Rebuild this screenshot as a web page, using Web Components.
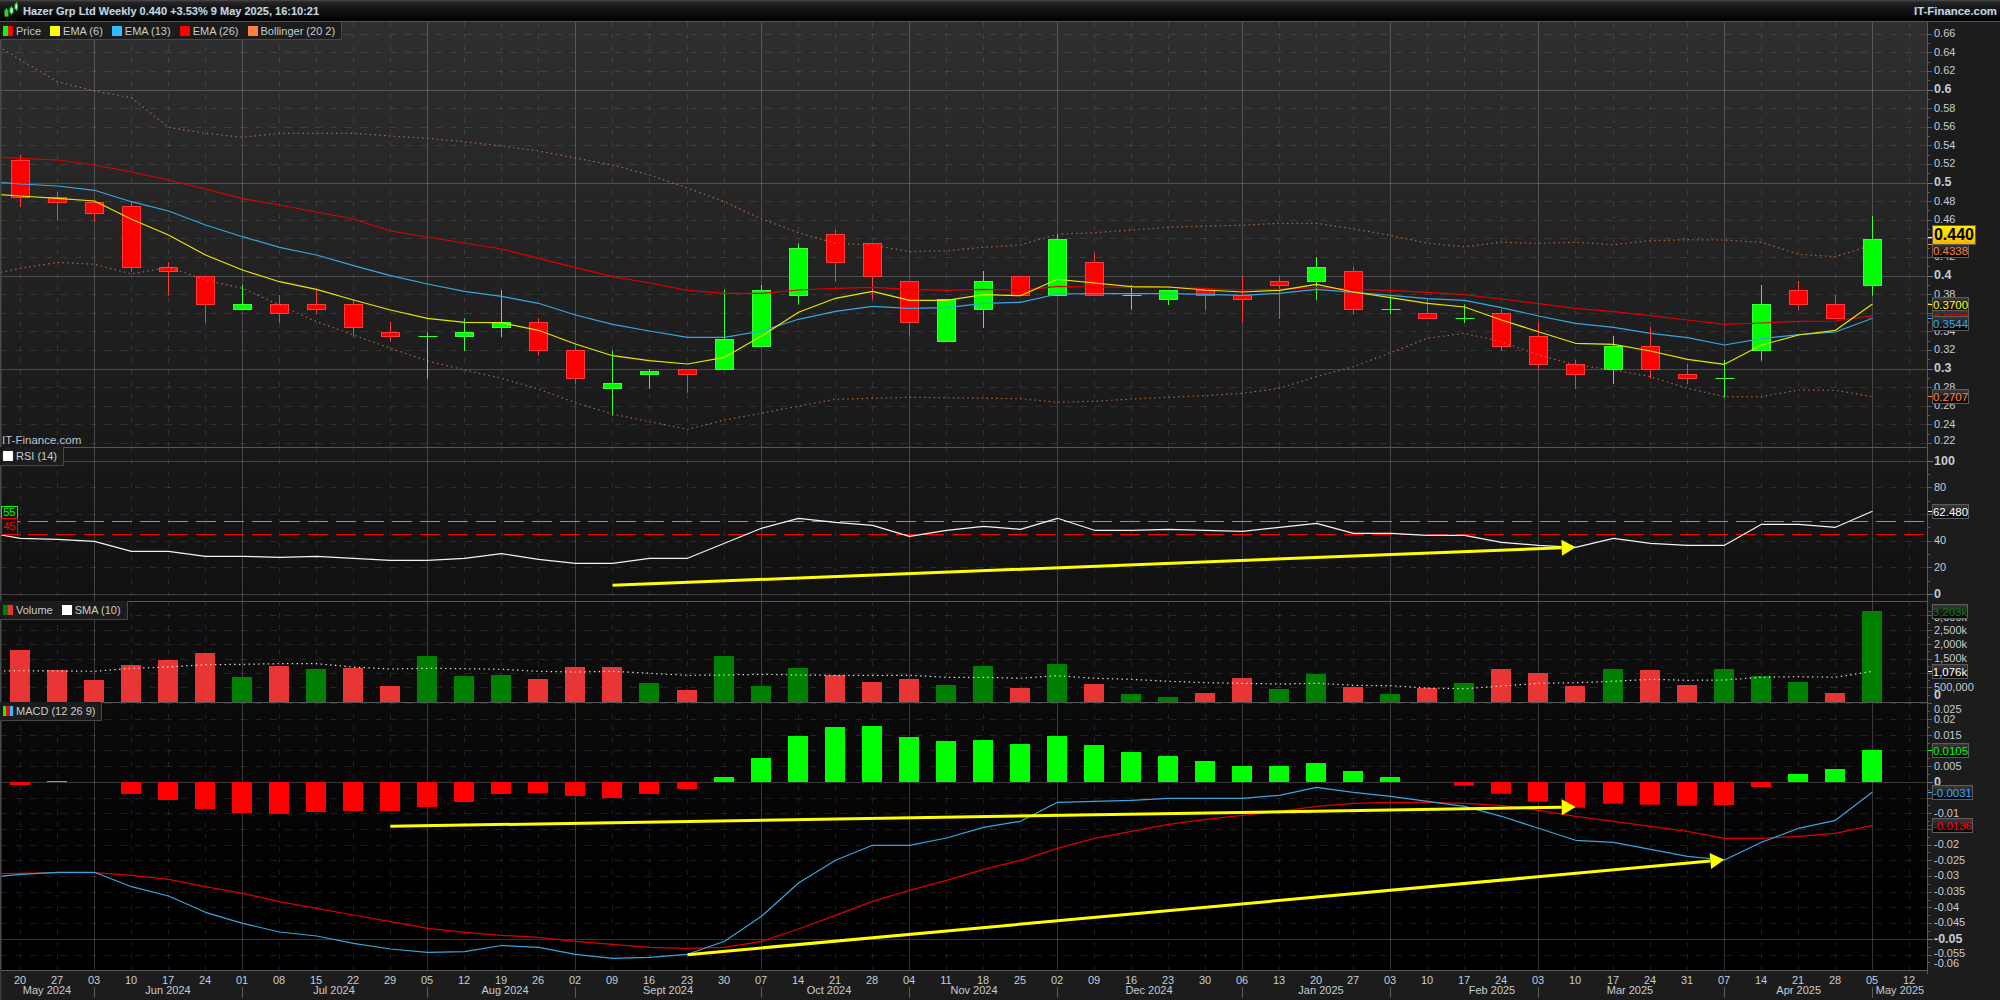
<!DOCTYPE html>
<html><head><meta charset="utf-8"><title>Hazer Grp Ltd Weekly</title>
<style>
html,body{margin:0;padding:0;background:#1c1c1c;overflow:hidden}
body{width:2000px;height:1000px;display:flex;flex-direction:column;font-family:"Liberation Sans",Arial,sans-serif;font-size:11px;color:#c4ccd4}
</style></head>
<body>
<it-header><span slot="title">Hazer Grp Ltd Weekly 0.440 +3.53% 9 May 2025, 16:10:21</span><span slot="site">IT-Finance.com</span></it-header>

<it-pane kind="price" top="22" height="425">
  <it-legend slot="legend" h="18">
    <it-legend-item colors="#0f0,#f00">Price</it-legend-item>
    <it-legend-item colors="#ff0">EMA (6)</it-legend-item>
    <it-legend-item colors="#33bbff">EMA (13)</it-legend-item>
    <it-legend-item colors="#f00">EMA (26)</it-legend-item>
    <it-legend-item colors="#ff7f40">Bollinger (20 2)</it-legend-item>
  </it-legend>
  <it-tag slot="tags" y="243" w="37" fg="#ff7f40" tick="244.6">0.4338</it-tag>
  <it-tag slot="tags" y="225" w="44" h="20" big tick="237.5">0.440</it-tag>
  <it-tag slot="tags" y="297" w="37" fg="#ff0" tick="304">0.3700</it-tag>
  <it-tag slot="tags" y="310" w="37" fg="#f00" tick="315.6">0.3582</it-tag>
  <it-tag slot="tags" y="316" w="37" fg="#35a8ff" tick="318.5">0.3544</it-tag>
  <it-tag slot="tags" y="389" w="37" fg="#ff7f40" tick="396.7">0.2707</it-tag>
  <span slot="note">IT-Finance.com</span>
</it-pane>

<it-pane kind="rsi" top="447" height="154">
  <it-legend slot="legend" h="19"><it-legend-item colors="#fff">RSI (14)</it-legend-item></it-legend>
  <it-level slot="tags" y="505.5" h="13.5" color="#0f0">55</it-level>
  <it-level slot="tags" y="518" h="16.5" color="#f00">45</it-level>
  <it-tag slot="tags" y="504" w="37" fg="#fff" tick="511.3">62.480</it-tag>
</it-pane>

<it-pane kind="vol" top="601" height="101">
  <it-legend slot="legend" h="19">
    <it-legend-item colors="#008000,#e83535">Volume</it-legend-item>
    <it-legend-item colors="#fff">SMA (10)</it-legend-item>
  </it-legend>
  <it-tag slot="tags" y="604" w="36" fg="#0a7a0a" tick="611">3,203k</it-tag>
  <it-tag slot="tags" y="664" w="36" fg="#fff" tick="671.5">1,076k</it-tag>
</it-pane>

<it-pane kind="macd" top="702" height="268">
  <it-legend slot="legend" h="19"><it-legend-item colors="#0f0,#f00,#33bbff">MACD (12 26 9)</it-legend-item></it-legend>
  <it-tag slot="tags" y="743" w="37" fg="#0f0" tick="750.3">0.0105</it-tag>
  <it-tag slot="tags" y="785" w="41" fg="#35a8ff" tick="792.3">-0.0031</it-tag>
  <it-tag slot="tags" y="818" w="41" fg="#f00" tick="825.7">-0.0136</it-tag>
</it-pane>

<it-timeaxis></it-timeaxis>

<script>
const X0=20.3,DX=37.04;
const cx=i=>Math.floor(X0+DX*i)+.5;
const SOLID=new Set([2,6,11,15,20,24,28,33,37,41,46,50]);
const COLS=['#2f2f2f','#000'];
const CANDLES=[
[155,160.3,197.7,207,'r'],[192,197.3,202.7,220.7,'r'],[202,202,213.7,220.7,'r'],[201.3,206.3,267.7,272.3,'r'],
[262.3,267.3,271.7,295.7,'r'],[276.3,276.3,304.7,322.7,'r'],[285,304.3,309.7,309.7,'g'],[295,304.3,313.7,322.7,'r'],
[289.7,304.3,309.7,313.7,'r'],[300,304.3,327.7,336.7,'r'],[322,332.3,336.7,341.7,'r'],[332.3,336.3,336.3,378.7,'g'],
[318.3,332.3,336.7,351,'g'],[290,322.3,327.7,337,'g'],[318.3,322.3,350.7,355.7,'r'],[345.7,350.3,378.7,383.7,'r'],
[350.3,383.3,388.7,415.7,'g'],[369,371.3,374.7,388.7,'g'],[369.3,369.3,374.3,392.7,'r'],[290,339.3,369.7,369.7,'g'],
[285,290.3,346.7,346.7,'g'],[243.3,248.3,295.7,304.7,'g'],[230,234.3,262.7,281.7,'r'],[243.3,243.3,276.7,299.7,'r'],
[281.3,281.3,322.7,337,'r'],[299.3,299.3,341.7,341.7,'g'],[271,281.3,309.7,328,'g'],[276.3,276.3,295.7,295.7,'r'],
[234.3,239.3,295.7,295.7,'g'],[253,262.3,295.7,295.7,'r'],[285,295.3,295.3,309.7,'g'],[290.3,290.3,299.7,305,'g'],
[290.3,290.3,295.7,310,'r'],[276.3,295.7,299.7,322.7,'r'],[276.3,281.3,285.7,319,'r'],[257,267.3,281.7,299.7,'g'],
[267,271.3,309.7,313.7,'r'],[295.7,309.3,309.3,314,'g'],[299,313.3,318.7,318.7,'r'],[304.3,318.3,318.3,323,'g'],
[309,313.3,346.7,351,'r'],[322.3,336.3,364.7,370,'r'],[360,364.3,374.7,389,'r'],[336,346.3,369.7,384,'g'],
[327,346.3,369.7,378.7,'r'],[364,374.3,378.7,384,'r'],[360,378.3,378.3,397.3,'g'],[285,304,350.7,360.7,'g'],
[281,290.3,304.7,310,'r'],[295,304.3,318.7,318.7,'r'],[216,239.3,285.7,295.7,'g']];
const EMA26=[158.3,160,165,172,180,189,198.7,205,212,219,231,237,243,249,258.3,267.7,276.7,283,290.3,293.3,293.3,290,288.3,287.3,289.3,290.3,289.3,290.3,286.3,287,287.3,287.3,288.7,290,289.3,287.3,289.3,290.3,292.3,294.7,299,303.7,308.3,311.7,315.7,320,324.3,323,321.3,321,315.7];
const EMA13=[184,186,190.3,201.7,211,225,236.7,247.3,255,265.7,275.7,284,291.3,296.3,303.3,315,324.3,331,337.3,337.3,331,319.3,311.3,306.3,308.3,307.7,303.3,302.3,294,293.7,293.7,293.7,294.3,295.3,293.3,289.3,292.3,295.3,298.7,300.3,307.7,316,323.3,327.3,333.3,337.7,345,338.7,334.7,332,318.3];
const EMA6=[196,198.3,201,219.3,235,255,270,281.7,289.3,300,310,318.3,322.3,322.7,330.3,344,355.7,360.7,364,357.3,336,312.3,298.3,291.3,300.3,300.3,294.7,295.7,279.3,283,286.7,287,290,292,290.3,284.3,292,297.7,303.3,307,320,331.7,343.3,344.3,351,359.3,364.3,345,335,330.3,304];
const BBU=[60,81.7,91,97.7,127.3,133.3,137.3,133.3,133.3,133.3,136,138.3,141.7,146,151,158,165,175,188,201.7,219,232.7,243.3,245,251.7,250.7,247.3,245,234.3,232.7,230,227.3,226,225.3,223.3,223.3,229,235.3,243.3,246.7,242.3,243.3,242.3,244.7,240.7,239.7,240,242.3,254.3,256.7,245];
const BBL=[268.3,262.3,264.3,274,267.3,280,288.3,305,321.7,335,348.3,361,370,378.3,389,402.7,414,421.7,429.3,420,413.3,406,399.3,398.3,397.3,397.7,398.3,398.7,402.3,401.3,399,397.3,395.7,393.3,388.3,376.7,366.7,352.7,338.3,333.3,341.7,355,365,370,376.7,388.3,396.7,396.7,390,390.3,396.7];
const RSI=[538.3,539.3,541.3,551.3,551.3,556.3,556.3,557.3,556.3,558.3,560.3,560.3,558.3,553.7,559.3,563.3,563.3,558.3,558.3,543.3,528.3,518.3,522.3,525.3,536.3,530.3,526.3,529.3,518.3,530.3,530.3,529.3,530.3,531.3,527.3,523.3,533.3,533.3,535.3,535.3,542.3,545.3,547.3,538.3,543.3,545.3,545.3,524.3,524.3,527.3,511.3];
const VOL=[[650,'r'],[670,'r'],[680,'r'],[665,'r'],[660,'r'],[653,'r'],[677,'g'],[666,'r'],[669,'g'],[668,'r'],[686,'r'],[656,'g'],[676,'g'],[675,'g'],[679,'r'],[667,'r'],[667,'r'],[683,'g'],[690,'r'],[656,'g'],[686,'g'],[668,'g'],[675,'r'],[682,'r'],[679,'r'],[685,'g'],[666,'g'],[688,'r'],[664,'g'],[684,'r'],[694,'g'],[697,'g'],[693,'r'],[678,'r'],[689,'g'],[674,'g'],[687,'r'],[694,'g'],[688,'r'],[683,'g'],[669,'r'],[673,'r'],[686,'r'],[669,'g'],[670,'r'],[685,'r'],[669,'g'],[676,'g'],[682,'g'],[693,'r'],[611,'g']];
const SMA=[670.7,671,671.3,668.3,667,664.7,664.3,663.7,663.7,667,669,668.3,668.7,669.3,671.3,672,671.3,673.3,675.3,675,674.3,675,675.3,675.3,675.3,677.3,677.3,678.3,675.7,678.3,679.3,681.3,682.7,683.3,684,683.3,685.3,685.7,688,688.7,686,683.3,682.7,681.3,679.3,680.3,680,677.3,676.7,677.3,671.3];
const HIST=[785,781,782,794,800,809,813,814,812,811,811,807,802,794,793,796,798,794,789,777,758,736,727,726,737,741,740,744,736,745,752,756,761,766,766,763,771,777,782,785.7,793.7,801.7,807.7,803.7,804.7,805.7,805,787,774,769,750];
const MBLUE=[874.3,872.3,872.3,886.7,896,912.3,923.3,932,936,943.3,949,952.3,951.7,945.5,947.3,954.3,958.3,957.3,954.3,941.3,916.3,883,860.3,845.3,845.3,838,827.3,821.3,802.3,801.3,800.3,798.3,798.3,798.3,795.3,787.3,792.3,796.3,801.3,806.3,816.3,828.3,840.3,842.3,849.3,856.3,860,842.3,828.3,820.3,792];
const MRED=[873.3,872.7,872.7,875.3,879.3,886.7,893.3,901.7,908.3,915,921.7,928.3,932.3,935.3,937.3,941.3,944.3,947.3,948.3,947.3,941.3,929,915.3,901.3,890.3,880.3,869.3,860.3,848.3,838.3,831.3,824.3,819.3,815.3,811.3,806.3,803.3,802.3,802.3,803.3,805.3,810.3,816.3,821.3,826.3,831.3,838.3,838.3,836.3,833.3,825.3];
const poly=(a,c,w,extra='',start)=>{let p=a.map((y,i)=>cx(i)+','+y).join(' ');if(start)p=start+' '+p;return `<polyline points="${p}" fill="none" stroke="${c}" stroke-width="${w}" stroke-linejoin="round" ${extra}/>`};
const HG='rgba(255,255,255,.1)',SG='rgba(255,255,255,.2)';
const hd=y=>`<line x1="0" x2="1928" y1="${Math.floor(y)+.5}" y2="${Math.floor(y)+.5}" stroke="${HG}" stroke-dasharray="7 8"/>`;
const hs=y=>`<line x1="0" x2="1928" y1="${Math.floor(y)+.5}" y2="${Math.floor(y)+.5}" stroke="${SG}"/>`;
const verticals=(t,b)=>{let s='';for(let i=0;i<52;i++){s+=SOLID.has(i)?`<line x1="${cx(i)}" x2="${cx(i)}" y1="${t}" y2="${b}" stroke="${SG}"/>`:`<line x1="${cx(i)}" x2="${cx(i)}" y1="${t}" y2="${b}" stroke="${HG}" stroke-dasharray="5 7"/>`}return s};
const arrow=(x1,y1,tx,ty,w=3)=>{const L=Math.hypot(tx-x1,ty-y1),ux=(tx-x1)/L,uy=(ty-y1)/L,bx=tx-ux*14,by=ty-uy*14,nx=-uy*8,ny=ux*8;
 return `<line x1="${x1}" y1="${y1}" x2="${bx}" y2="${by}" stroke="#ff0" stroke-width="${w}"/><polygon fill="#ff0" points="${tx},${ty} ${bx+nx},${by+ny} ${bx-nx},${by-ny}"/>`};
const lab=(t,yc,b)=>`<text x="1934" y="${yc+4}" ${b?'font-weight="700" font-size="12.5"':''}>${t}</text>`;
const tick=(y,l,c='#5a5a5a')=>`<line x1="1928" x2="${1928+l}" y1="${Math.floor(y)+.5}" y2="${Math.floor(y)+.5}" stroke="${c}"/>`;

const KINDS={
 price(){let g='',a='';
  for(let v=66;v>=22;v-=1){const y=90+(60-v)*9.3;
    if(v%10==0){g+=hs(y);a+=tick(y,5,'#777')}else if(v%2==0){g+=hd(y);a+=tick(y,4)}else a+=tick(y,2);
    if(v%2==0&&v!=44&&v!=36){const t=(v/100).toString();a+=lab(t,v==22?440:y-1,v%10==0)}
  }
  let c='';CANDLES.forEach((k,i)=>{const x=cx(i),col=k[4]=='r'?['#f00','#ff3a3a']:['#0f0','#3cff3c'],T=Math.floor(k[1])+.5,B=Math.floor(k[2])+.5;
    c+=`<line x1="${x}" x2="${x}" y1="${k[0]}" y2="${k[3]}" stroke="${col[1]}"/>`;
    c+=T==B?`<line x1="${x-9}" x2="${x+10}" y1="${T}" y2="${T}" stroke="${col[1]}"/>`:`<rect x="${x-9}" y="${T}" width="18" height="${B-T}" fill="${col[0]}" stroke="${col[1]}"/>`});
  const dots=`stroke-dasharray="1.4 3.4"`;
  const l=poly(BBU,'#b8693e',1.2,dots,'3,49')+poly(BBL,'#b8693e',1.2,dots,'1,272.3')+poly(EMA26,'#dc0000',1.25,'','0,157')+poly(EMA13,'#38a6de',1.2,'','0,182.3')+poly(EMA6,'#e6e600',1.2,'','0,194.7');
  return {g,c:c+l,a}},
 rsi(){let g=hs(461.3)+hs(594.3),a='';
  for(let v=90;v>0;v-=10){const y=461.3+(100-v)*1.33;if(v%20==0)g+=hd(y);a+=tick(y,v%20==0?4:2)}
  a+=tick(461.3,5,'#777')+tick(594.3,5,'#777');
  a+=lab('100',461,1)+lab('80',487.3)+lab('40',540.3)+lab('20',567.3)+lab('0',594,1);
  const d=`stroke-dasharray="20 8"`;
  const c=`<line x1="0" x2="1924" y1="521.5" y2="521.5" stroke="#2fd62f" ${d}/><line x1="0" x2="1924" y1="534.5" y2="534.5" stroke="#f00" ${d}/>`+poly(RSI,'#f2f2f2',1.2,'','1,535')+arrow(612.5,585.3,1575.7,547.3);
  return {g,c,a}},
 vol(){let g='',a='',c='';
  for(let v=500;v<=3000;v+=500){const y=702.3-v*.0288;g+=hd(y);a+=tick(y,4);a+=tick(y+7.2,2)}
  a+=lab('3,000k',617)+lab('2,500k',630)+lab('2,000k',644)+lab('1,500k',658)+lab('500,000',687.3)+lab('0',695,1);
  VOL.forEach((k,i)=>{c+=`<rect x="${cx(i)-10.5}" y="${k[0]}" width="20" height="${702-k[0]}" fill="${k[1]=='r'?'#e83535':'#008000'}"/>`});
  c+=poly(SMA,'#e4e4e4',1.2,'stroke-dasharray="1.4 3.4"','4,671');
  return {g,c,a}},
 macd(){let g='',a='',c='';
  for(let k=5;k>=-12;k--){const y=782.3-k*15.7;if(k==0||k==-10)g+=hs(y);else g+=hd(y);a+=tick(y,k==0||k==-10?5:4,k==0||k==-10?'#777':'#5a5a5a');a+=tick(y-7.85,2)}
  [['0.025',709.3],['0.02',719],['0.015',735],['0.005',766],['0',781.7,1],['-0.01',813.3],['-0.02',844],['-0.025',859.7],['-0.03',875.3],['-0.035',891],['-0.04',906.7],['-0.045',922],['-0.05',938.7,1],['-0.055',953.3],['-0.06',963.3]].forEach(r=>a+=lab(r[0],r[1],r[2]));
  HIST.forEach((h,i)=>{if(h==782)return;const up=h<782;c+=`<rect x="${cx(i)-10.5}" y="${up?h:782}" width="20" height="${Math.abs(h-782)}" fill="${up?'#0f0':'#f00'}"/>`});
  c+=poly(MRED,'#dc0000',1.25,'','0,873.7')+poly(MBLUE,'#38a6de',1.2,'','0,876.3');
  c+=arrow(390.3,826.3,1575.7,807)+arrow(687.5,954.7,1724.3,859.7);
  return {g,c,a}}
};

class ItHeader extends HTMLElement{constructor(){super();this.attachShadow({mode:'open'}).innerHTML=`<style>
:host{display:flex;align-items:center;height:21px;border-bottom:1px solid #555;background:linear-gradient(#4c4c4c 0,#262626 2px,#161616 8px,#000 100%);flex:none;padding:0 3px 0 4px;gap:5px;font:700 11px "Liberation Sans",Arial,sans-serif;color:#c6d2da;text-shadow:0 0 1px #2a4a66}
svg{flex:none}
.t{flex:1;white-space:nowrap}
::slotted([slot=site]){font-size:11.4px}
</style><svg width="14" height="18" viewBox="0 0 14 18"><g stroke="#35c035" fill="#39d839"><path d="M2.5 6v9" fill="none"/><rect x="1" y="8" width="3" height="6"/><path d="M7.5 4v9" fill="none"/><rect x="6" y="6" width="3" height="5" fill="#cfe"/><path d="M12.5 0v9" fill="none"/><rect x="11" y="2" width="2.5" height="5" fill="#cfe"/></g></svg><div class="t"><slot name="title"></slot></div><slot name="site"></slot>`}}
customElements.define('it-header',ItHeader);

class ItLegend extends HTMLElement{constructor(){super();this.attachShadow({mode:'open'}).innerHTML=`<style>
:host{position:absolute;left:0;top:0;display:flex;box-sizing:border-box}
</style><slot></slot>`}connectedCallback(){this.style.height=this.getAttribute('h')+'px'}}
customElements.define('it-legend',ItLegend);

class ItLegendItem extends HTMLElement{constructor(){super();this.attachShadow({mode:'open'})}
connectedCallback(){const c=(this.getAttribute('colors')||'').split(',');
this.shadowRoot.innerHTML=`<style>
:host{display:flex;align-items:center;gap:3px;height:100%;box-sizing:border-box;padding:0 6px 0 2px;background:#1c1c1c;border:1px solid #484848;border-top:0;border-left-color:transparent;margin-left:-1px;font:11px "Liberation Sans",Arial,sans-serif;color:#c4ccd4;white-space:nowrap}
:host(:first-child){margin-left:0}
.s{display:flex;width:10px;height:10px;flex:none}.s i{flex:1}
</style><span class="s">${c.map(x=>`<i style="background:${x}"></i>`).join('')}</span><slot></slot>`}}
customElements.define('it-legend-item',ItLegendItem);

class ItTag extends HTMLElement{constructor(){super();this.attachShadow({mode:'open'})}
tickHTML(){const y=Math.floor(+this.getAttribute('tick'))+.5;return `<line x1="1928" x2="1933" y1="${y}" y2="${y}" stroke="${this.getAttribute('fg')||'#fff'}"/>`}
connectedCallback(){const top=+this.closest('it-pane').getAttribute('top'),y=+this.getAttribute('y'),big=this.hasAttribute('big'),h=this.getAttribute('h')||15;
this.shadowRoot.innerHTML=`<style>
:host{position:absolute;left:1932px;top:${y-top}px;width:${this.getAttribute('w')}px;height:${h}px;box-sizing:border-box;display:flex;align-items:center;justify-content:center;border:1px solid #5c5c5c;white-space:nowrap;font:${big?'700 16px':'11.5px'} "Liberation Sans",Arial,sans-serif;color:${big?'#000':this.getAttribute('fg')};background:${big?'linear-gradient(#ffee00,#f5b400)':'linear-gradient(#3a3a3a,#000)'}}
</style><slot></slot>`}}
customElements.define('it-tag',ItTag);

class ItLevel extends HTMLElement{constructor(){super();this.attachShadow({mode:'open'})}
connectedCallback(){const top=+this.closest('it-pane').getAttribute('top'),c=this.getAttribute('color');
this.shadowRoot.innerHTML=`<style>
:host{position:absolute;left:1px;top:${+this.getAttribute('y')-top}px;width:16.5px;height:${this.getAttribute('h')}px;box-sizing:border-box;border:1px solid ${c};background:#141414;color:${c};display:flex;align-items:center;justify-content:center;font:11px/11px "Liberation Sans",Arial,sans-serif}
</style><slot></slot>`}}
customElements.define('it-level',ItLevel);

class ItPane extends HTMLElement{constructor(){super();this.attachShadow({mode:'open'})}
connectedCallback(){const top=+this.getAttribute('top'),h=+this.getAttribute('height'),r=KINDS[this.getAttribute('kind')]();
const tags=[...this.querySelectorAll('it-tag')].map(t=>t.tickHTML()).join('');
this.shadowRoot.innerHTML=`<style>
:host{display:grid;grid-template-columns:1928px 72px;height:${h}px;flex:none;position:relative;overflow:hidden}
.plot{background:linear-gradient(${COLS[0]},${COLS[1]}) 0 ${22-top}px/100% 880px no-repeat #000;position:relative}
.axis{background:#1c1c1c}
svg{display:block}
text{font:11px "Liberation Sans",Arial,sans-serif;fill:#c4ccd4}
text[font-weight]{font-weight:700;font-size:12.5px}
::slotted([slot=note]){position:absolute;left:2px;bottom:0;font:11.5px "Liberation Sans",Arial,sans-serif;color:#bcc6ce;line-height:13px}
</style><div class="plot"><svg width="1928" height="${h}" viewBox="0 ${top} 1928 ${h}">${verticals(top,top+h)}${r.g}${r.c}
<rect x="0" y="${top}" width="1.5" height="${h}" fill="#4a4a4a"/><line x1="1927.5" x2="1927.5" y1="${top}" y2="${top+h}" stroke="#5a5a5a"/>${top==22?'':`<line x1="0" x2="1928" y1="${top+.5}" y2="${top+.5}" stroke="#565656"/>`}</svg><slot name="note"></slot><slot name="legend"></slot></div>
<div class="axis"><svg width="72" height="${h}" viewBox="1928 ${top} 72 ${h}">${r.a}${tags}</svg></div><slot name="tags"></slot>`}}

class ItTimeaxis extends HTMLElement{constructor(){super();
const days='20 27 03 10 17 24 01 08 15 22 29 05 12 19 26 02 09 16 23 30 07 14 21 28 04 11 18 25 02 09 16 23 30 06 13 20 27 03 10 17 24 03 10 17 24 31 07 14 21 28 05 12'.split(' ');
const months=[['May 2024',47],['Jun 2024',168],['Jul 2024',334],['Aug 2024',505],['Sept 2024',668],['Oct 2024',829],['Nov 2024',974],['Dec 2024',1149],['Jan 2025',1321],['Feb 2025',1492],['Mar 2025',1630],['Apr 2025',1798.7],['May 2025',1900]];
let s=`<line x1="0" x2="1928" y1="970.5" y2="970.5" stroke="#5a5a5a"/><rect x="0" y="970" width="1.5" height="30" fill="#3a3a3a"/><line x1="1927.5" x2="1927.5" y1="970" y2="974" stroke="#5a5a5a"/>`;
days.forEach((d,i)=>{s+=`<text x="${cx(i)-.5}" y="984">${d}</text>`;if(SOLID.has(i))s+=`<line x1="${cx(i)}" x2="${cx(i)}" y1="987" y2="998" stroke="#5a5a5a"/>`});
months.forEach(m=>s+=`<text x="${m[1]}" y="994">${m[0]}</text>`);
this.attachShadow({mode:'open'}).innerHTML=`<style>
:host{display:block;height:30px;flex:none;background:#1c1c1c}
svg{display:block}
text{font:11px "Liberation Sans",Arial,sans-serif;fill:#c4ccd4;text-anchor:middle}
</style><svg width="2000" height="30" viewBox="0 970 2000 30">${s}</svg>`}}
customElements.define('it-timeaxis',ItTimeaxis);
customElements.define('it-pane',ItPane);
</script>
</body></html>
